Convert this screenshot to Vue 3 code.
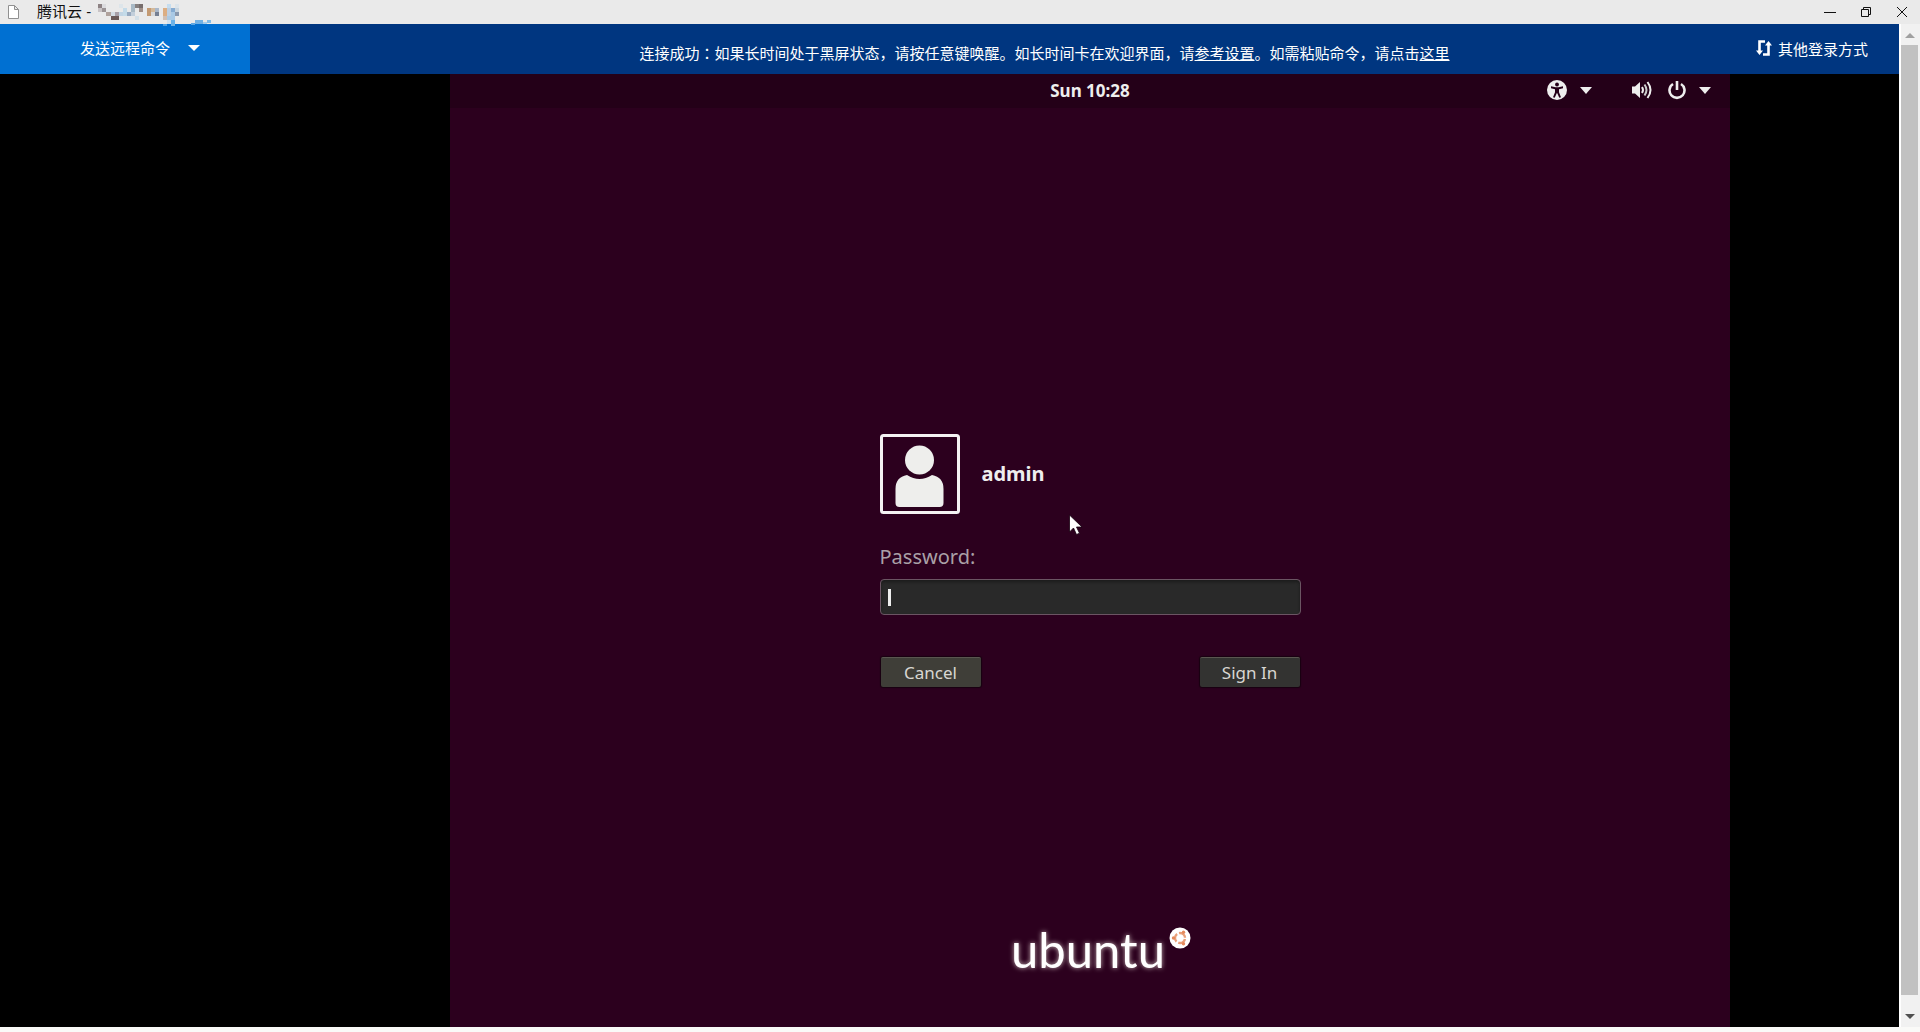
<script setup>
import { ref } from 'vue'

const title = '腾讯云 -'
const password = ref('')

// x, y, width, height, colour of each block of the masked host name
const mosaic = [
  [7, 4, 4, 4, '#8d8284'], [11, 4, 4, 4, '#dcdcdf'], [7, 8, 4, 4, '#c9c4c6'], [11, 8, 4, 4, '#9b9496'],
  [15, 12, 5, 4, '#b0a29c'], [20, 12, 4, 4, '#d3dce4'], [20, 16, 8, 4, '#6b5a58'], [24, 12, 4, 4, '#a8a0a8'],
  [28, 4, 4, 4, '#dde5ea'], [28, 12, 4, 4, '#c2d5e4'], [32, 8, 4, 8, '#c4dbe9'], [36, 12, 4, 4, '#97a9bf'],
  [40, 12, 4, 4, '#c3cfdb'], [40, 4, 4, 8, '#a9bac6'], [44, 4, 4, 4, '#86807f'], [48, 4, 4, 4, '#766d6c'],
  [48, 8, 4, 4, '#a08f88'], [44, 16, 4, 4, '#d4e0e8'], [56, 8, 4, 8, '#c49a72'], [60, 8, 4, 4, '#d3b99b'],
  [64, 8, 4, 4, '#a9b7c9'], [64, 12, 4, 4, '#757f92'], [60, 12, 4, 4, '#d9d8d8'], [72, 8, 4, 8, '#dcae83'],
  [72, 16, 4, 4, '#d0c0b5'], [76, 4, 4, 4, '#c5ddef'], [76, 8, 4, 8, '#bccfe2'], [80, 8, 4, 4, '#86abd1'],
  [80, 12, 4, 8, '#a9c9e5'], [84, 8, 4, 4, '#c9d5df'], [84, 12, 4, 4, '#8a98ad'], [76, 16, 4, 4, '#aac9e3'],
  [84, 4, 4, 4, '#dce4ea'], [72, 24, 4, 2, '#4ea0e3'], [80, 20, 4, 6, '#6bb2e8'], [76, 20, 4, 4, '#d0e1ef'],
  [104, 20, 8, 4, '#72b1e4'], [100, 23, 4, 2, '#5ca7e4'], [112, 22, 4, 2, '#a7cdea'], [116, 20, 4, 3, '#84bde8']
]
</script>

<template>
  <div class="window">
    <header class="titlebar">
      <svg class="file-icon" width="11" height="14" viewBox="0 0 11 14" fill="#fff" stroke="#909090">
        <path d="M.5.5h6l4 4v9H.5zM6.500.5v4h4" />
      </svg>
      <span class="title">{{ title }}</span>
      <svg class="mosaic" width="124" height="28" viewBox="0 0 124 28">
        <rect v-for="(m, i) in mosaic" :key="i" :x="m[0]" :y="m[1]" :width="m[2]" :height="m[3]" :fill="m[4]" />
      </svg>
      <div class="window-buttons">
        <button aria-label="Minimize"><svg width="12" height="12"><path d="M0 6.500h12" /></svg></button>
        <button aria-label="Restore"><svg width="12" height="12"><path d="M1.500 3.500h7v7h-7zM3.500 3.500v-2h7v7h-2" /></svg></button>
        <button aria-label="Close"><svg width="12" height="12"><path d="M1 1l10 10M11 1L1 11" /></svg></button>
      </div>
    </header>

    <div class="viewport">
      <main class="page">
        <nav class="toolbar">
          <button class="send">发送远程命令<svg width="12" height="6"><path d="M0 0h12L6 6z" fill="#fff" /></svg></button>
          <p class="notice">连接成功<span class="colon">：</span>如果长时间处于黑屏状态，请按任意键唤醒。如长时间卡在欢迎界面，请<a href="#">参考设置</a>。如需粘贴命令，请点击<a href="#">这里</a></p>
          <button class="other">
            <svg width="16" height="16" viewBox="0 0 16 16" fill="none" stroke="#fff" stroke-width="2.600">
              <path d="M9 1.500H3.500V12M7 14.500h5.500V4" />
              <path d="M0 10.500h7L3.500 15zM9 5.500h7L12.500 1z" fill="#fff" stroke="none" />
            </svg>其他登录方式
          </button>
        </nav>

        <section class="screen">
          <div class="guest">
            <div class="panel">
              <time class="clock">Sun 10:28</time>
              <div class="indicators">
                <svg width="20" height="20" viewBox="0 0 20 20">
                  <circle cx="10" cy="10" r="10" fill="#eee" />
                  <circle cx="10" cy="4.500" r="1.900" fill="#240018" />
                  <path d="M4 6.300l4.500 1h3l4.500-1v1.900l-4 1v3l2 5-1.700.6-2.300-5-2.300 5-1.700-.6 2-5v-3l-4-1z" fill="#240018" />
                </svg>
                <svg class="drop" width="12" height="7"><path d="M0 0h12L6 7z" fill="#eee" /></svg>
                <svg class="sound" width="20" height="18" viewBox="0 0 20 18" fill="none" stroke="#eee" stroke-width="2">
                  <path d="M0 5.500h3L8 1v16l-5-4.500H0z" fill="#eee" stroke="none" />
                  <path d="M10 6q2 3 0 6" /><path d="M12.500 3.500q4 5.500 0 11" stroke="#ccc" /><path d="M15.500 1q6 8 0 16" />
                </svg>
                <svg class="power" width="18" height="20" viewBox="0 0 18 20" fill="none" stroke="#eee" stroke-width="2.600">
                  <path d="M5 4A7.500 7.500 0 1 0 13 4M9 1v9" />
                </svg>
                <svg class="drop" width="12" height="7"><path d="M0 0h12L6 7z" fill="#eee" /></svg>
              </div>
            </div>

            <form class="login" @submit.prevent>
              <div class="user">
                <svg class="avatar" width="80" height="80" viewBox="0 0 80 80">
                  <rect x="1.500" y="1.500" width="77" height="77" rx="2" fill="none" stroke="#f4f2f3" stroke-width="3" />
                  <circle cx="39.500" cy="26" r="14.500" fill="#eeeeec" />
                  <path d="M27 41q12.500 8 25 0 11.500 2 11.500 14v14q0 4-4 4h-40q-4 0-4-4V55Q15.500 43 27 41z" fill="#eeeeec" />
                </svg>
                <span class="name">admin</span>
              </div>
              <label for="password">Password:</label>
              <div class="field">
                <input id="password" v-model="password" type="password" />
                <i class="caret"></i>
              </div>
              <div class="actions">
                <button type="button" class="cancel">Cancel</button>
                <button type="submit">Sign In</button>
              </div>
            </form>

            <div class="brand">
              <span>ubuntu</span>
              <svg width="22" height="22" viewBox="0 0 22 22">
                <circle cx="11" cy="11" r="10.500" fill="#fff" />
                <circle cx="11" cy="11" r="5" fill="none" stroke="#e9a07a" stroke-width="2.400" stroke-dasharray="8.470 2" stroke-dashoffset="-1" />
                <g fill="#e58a5c"><circle cx="4.500" cy="11" r="1.700" /><circle cx="14.500" cy="5.300" r="1.700" /><circle cx="14.500" cy="16.700" r="1.700" /></g>
              </svg>
            </div>

            <svg class="pointer" width="14" height="22" viewBox="0 0 14 22">
              <path d="M.5 1v17l4-4 3 6.500 3-1.300-3-6.200h5.500z" fill="#fff" stroke="#160010" stroke-width=".8" />
            </svg>
          </div>
        </section>
      </main>

      <div class="scrollbar">
        <svg width="10" height="5"><path d="M0 5h10L5 0z" fill="#a0a0a0" /></svg>
        <div class="thumb"></div>
        <svg width="10" height="5"><path d="M0 0h10L5 5z" fill="#505050" /></svg>
      </div>
    </div>
  </div>
</template>

<style>
body {
  margin: 0;
}
</style>

<style scoped>
* {
  box-sizing: border-box;
}

.window {
  display: flex;
  flex-direction: column;
  min-height: 100vh;
  padding-bottom: 5px;
  background: #fafaf8;
  font-family: "Liberation Sans", "Noto Sans CJK SC", sans-serif;
  font-size: 15px;
}

svg {
  flex: none;
}

button {
  border: 0;
  padding: 0;
  background: none;
  font: inherit;
  color: inherit;
}

.titlebar {
  display: flex;
  align-items: center;
  height: 24px;
  padding: 0 12px 0 8px;
  background: #eaeaea;
  color: #111;
}

.title {
  margin-left: 18px;
  line-height: 24px;
}

.mosaic {
  position: relative;
  z-index: 1;
  align-self: flex-start;
}

.window-buttons {
  display: flex;
  gap: 24px;
  margin-left: auto;
}

.window-buttons button {
  display: flex;
  width: 12px;
}

.window-buttons path {
  fill: none;
  stroke: #111;
}

.viewport {
  display: flex;
  flex: 1;
}

.page {
  display: flex;
  flex: 1;
  flex-direction: column;
  background: #000;
}

.toolbar {
  display: flex;
  height: 50px;
  background: #003680;
  color: #fff;
}

.send {
  display: flex;
  align-items: center;
  justify-content: center;
  gap: 18px;
  width: 250px;
  padding: 0 0 3px 30px;
  background: #0070d2;
}

.notice {
  flex: 1;
  margin: 0;
  padding: 10px 0 0 130px;
  line-height: 40px;
  text-align: center;
}

.notice a {
  color: inherit;
}

.colon {
  font-family: "Noto Sans CJK JP", sans-serif;
  line-height: 20px;
}

.other {
  display: flex;
  align-items: center;
  justify-content: flex-end;
  gap: 6px;
  width: 190px;
  padding: 0 31px 2px 0;
}

.screen {
  display: flex;
  flex: 1;
  padding: 0 169px 0 450px;
}

.guest {
  position: relative;
  display: flex;
  flex: 1;
  flex-direction: column;
  align-items: center;
  background: #2c001e;
  color: #eee;
  font-family: "Noto Sans", sans-serif;
}

.panel {
  display: grid;
  grid-template-columns: 1fr auto 1fr;
  align-items: center;
  align-self: stretch;
  height: 34px;
  padding: 0 19px 2px;
  background: #240018;
}

.clock {
  grid-column: 2;
  font-size: 17px;
  font-weight: 700;
}

.indicators {
  display: flex;
  align-items: center;
  justify-content: flex-end;
}

.drop {
  margin-left: 13px;
}

.sound {
  margin-left: 40px;
}

.power {
  margin-left: 16px;
}

.login {
  width: 421px;
  margin-top: 326px;
}

.user {
  display: flex;
  align-items: center;
  gap: 22px;
}

.name {
  padding-bottom: 2px;
  font-size: 20px;
  font-weight: 700;
}

label {
  display: block;
  margin-top: 27px;
  color: #aaa0a7;
  font-size: 20px;
  line-height: 32px;
}

.field {
  position: relative;
  margin-top: 6px;
}

input {
  display: block;
  width: 100%;
  height: 36px;
  border: 1px solid #6b5563;
  border-radius: 4px;
  padding: 0 8px;
  background: #292929;
  box-shadow: inset 0 2px 3px #1c1c1c;
  color: #fff;
  font: inherit;
}

.caret {
  position: absolute;
  top: 10px;
  left: 8px;
  width: 3px;
  height: 17px;
  background: #eee;
}

.actions {
  display: flex;
  justify-content: space-between;
  margin-top: 42px;
  padding: 0 1px;
}

.actions button {
  width: 100px;
  height: 30px;
  border-top: 1px solid #5a5650;
  border-radius: 2px;
  background: #333331;
  box-shadow: 0 0 1px 1px #180010;
  color: #d8d6d2;
  font-size: 17px;
  line-height: 28px;
}

.actions .cancel {
  background: #3f3e38;
}

.brand {
  display: flex;
  align-items: flex-start;
  gap: 4px;
  margin: auto 0 48px 22px;
  color: #fff;
  font-family: "Noto Sans", sans-serif;
  font-size: 44px;
  line-height: 60px;
  text-shadow: 0 0 5px #cbb;
}

.brand span {
  font-family: Lato, sans-serif;
  font-size: 49px;
}

.brand svg {
  margin-top: 8px;
}

.pointer {
  position: absolute;
  top: 440px;
  left: 619px;
}

.scrollbar {
  display: flex;
  flex-direction: column;
  align-items: center;
  justify-content: space-between;
  width: 21px;
  padding: 9px 2px 8px 0;
  border-left: 2px solid #fff;
  background: #f1f1f1;
}

.thumb {
  flex: 1;
  width: 17px;
  margin: 7px 0 19px;
  background: #c1c1c1;
}
</style>
